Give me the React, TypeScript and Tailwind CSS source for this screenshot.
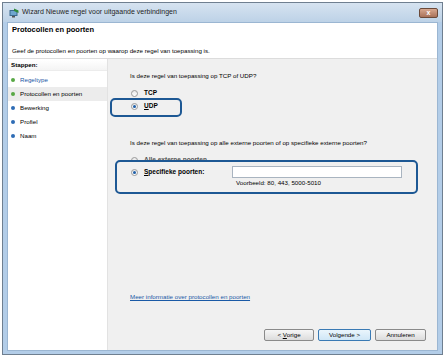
import React from "react";

const font = { fontFamily: '"Liberation Sans", Arial, sans-serif' };

function Radio({ checked }: { checked?: boolean }) {
  return (
    <span className="w-[7px] h-[7px] rounded-full border border-[#9a9a9a] bg-gradient-to-b from-[#e8e8e8] to-[#ffffff] flex items-center justify-center shrink-0">
      {checked && <span className="w-[3px] h-[3px] rounded-full bg-[#1f5fa8]" />}
    </span>
  );
}

function Bullet({ color }: { color: string }) {
  return <span className={`w-[4px] h-[4px] rounded-full ${color} shrink-0`} />;
}

function WindowIcon() {
  return (
    <svg width="10" height="10" viewBox="0 0 10 10">
      <rect x="0.5" y="2" width="8" height="6" rx="0.5" fill="#3d6a8e" />
      <rect x="1.5" y="3" width="6" height="4" fill="#6fa6cf" />
      <rect x="3" y="8" width="3" height="1.5" fill="#555" />
      <path d="M5 0.5 L9.5 2.5 L9.5 5 L5 3 Z" fill="#2f8a3a" />
    </svg>
  );
}

export default function App() {
  const steps = [
    { label: "Regeltype", color: "bg-[#58a845]", text: "text-[#1a57a6]" },
    { label: "Protocollen en poorten", color: "bg-[#58a845]", text: "text-black", active: true },
    { label: "Bewerking", color: "bg-[#2e6cb5]", text: "text-black" },
    { label: "Profiel", color: "bg-[#2e6cb5]", text: "text-black" },
    { label: "Naam", color: "bg-[#2e6cb5]", text: "text-black" },
  ];

  return (
    <div className="w-[446px] h-[359px] bg-white pt-[2px] pl-[2px]" style={font}>
      {/* Window frame */}
      <div className="w-[441px] h-[353px] border border-[#6f7f90] bg-[#b3cde8] flex flex-col">
        {/* Title bar */}
        <div className="h-[19px] flex items-center pl-[6px] pr-[4px] bg-gradient-to-b from-[#d6e3f0] to-[#bdd2e7]">
          <WindowIcon />
          <span className="ml-[3px] text-[7px] text-[#1e1e1e]">Wizard Nieuwe regel voor uitgaande verbindingen</span>
          <div className="ml-auto w-[19px] h-[10px] rounded-[2px] border border-[#6b4a3a] bg-gradient-to-b from-[#d8a890] to-[#a9725a] flex items-center justify-center text-white text-[7px] leading-none font-bold">
            x
          </div>
        </div>

        {/* Client area */}
        <div className="flex-1 mx-[4px] mb-[3px] flex flex-col bg-white border border-[#9bb6d2]">
          {/* Header */}
          <div className="h-[36px] border-b border-[#dcdcdc] pl-[4px] flex flex-col">
            <div className="mt-[2px] h-[10px] flex items-center text-[7.5px] font-bold text-black">Protocollen en poorten</div>
            <div className="mt-[11px] h-[10px] flex items-center text-[6.2px] text-black">
              Geef de protocollen en poorten op waarop deze regel van toepassing is.
            </div>
          </div>

          {/* Body */}
          <div className="flex-1 flex">
            {/* Steps */}
            <div className="w-[100px] border-r border-[#e2e2e2] bg-white flex flex-col">
              <div className="h-[11px] mt-[1px] px-[3px] flex items-center text-[6.2px] font-bold text-black border-b border-[#ececec] bg-gradient-to-b from-white to-[#f4f4f4]">
                Stappen:
              </div>
              <div className="mt-[2px] flex flex-col">
                {steps.map((s) => (
                  <div
                    key={s.label}
                    className={`h-[14px] flex items-center gap-[5px] pl-[3px] text-[6.2px] ${s.text} ${
                      s.active ? "bg-[#ececec]" : ""
                    }`}
                  >
                    <Bullet color={s.color} />
                    {s.label}
                  </div>
                ))}
              </div>
            </div>

            {/* Right pane */}
            <div className="relative flex-1 bg-[#f0f0f0] flex flex-col pl-[22px] pr-[11px] text-[6.2px] text-black">
              {/* annotation boxes */}
              <div className="absolute left-[2px] top-[39px] w-[72px] h-[19px] rounded-[5px] border-2 border-[#1d5894]" />
              <div className="absolute left-[7px] top-[101px] w-[303px] h-[34px] rounded-[5px] border-2 border-[#1d5894] bg-[#f0f0f0] z-10" />

              <div className="mt-[12px] h-[10px] flex items-center">Is deze regel van toepassing op TCP of UDP?</div>
              <div className="mt-[7px] h-[10px] flex items-center gap-[6px] pl-[1px]">
                <Radio />
                <span className="font-bold text-[6.5px]">TCP</span>
              </div>
              <div className="mt-[3px] h-[10px] flex items-center gap-[6px] pl-[1px] relative z-10">
                <Radio checked />
                <span className="font-bold text-[6.5px]">
                  <span className="underline">U</span>DP
                </span>
              </div>

              <div className="mt-[27px] h-[10px] flex items-center">
                Is deze regel van toepassing op alle externe poorten of op specifieke externe poorten?
              </div>
              <div className="mt-[7px] h-[10px] flex items-center gap-[6px] pl-[1px] text-[#555]">
                <Radio />
                <span className="font-bold text-[6.5px]">
                  <span className="underline">A</span>lle externe poorten
                </span>
              </div>
              <div className="mt-[1px] h-[12px] flex items-center pl-[1px] relative z-20">
                <Radio checked />
                <span className="ml-[6px] w-[88px] font-bold text-[6.5px]">
                  <span className="underline">S</span>pecifieke poorten:
                </span>
                <div className="w-[170px] h-[12px] bg-white border border-[#a9b4c0]" />
              </div>
              <div className="h-[10px] flex items-center pl-[106px] relative z-20">Voorbeeld: 80, 443, 5000-5010</div>

              <div className="mt-[104px] h-[10px] flex items-center">
                <span className="underline text-[#1a5aa6]">Meer informatie over protocollen en poorten</span>
              </div>

              <div className="mt-[27px] h-[12px] flex justify-end gap-[4px]">
                <button className="w-[50px] h-[12px] rounded-[2px] border border-[#8a8a8a] bg-gradient-to-b from-[#f6f6f6] to-[#dcdcdc] text-[6.2px] text-black flex items-center justify-center">
                  &lt;&nbsp;<span className="underline">V</span>orige
                </button>
                <button className="w-[53px] h-[12px] rounded-[2px] border border-[#3a7ab4] bg-gradient-to-b from-[#eaf5fc] to-[#cfe6f6] text-[6.2px] text-black flex items-center justify-center">
                  Volgende &gt;
                </button>
                <button className="w-[51px] h-[12px] rounded-[2px] border border-[#8a8a8a] bg-gradient-to-b from-[#f6f6f6] to-[#dcdcdc] text-[6.2px] text-black flex items-center justify-center">
                  Annuleren
                </button>
              </div>
            </div>
          </div>
        </div>
      </div>
    </div>
  );
}
